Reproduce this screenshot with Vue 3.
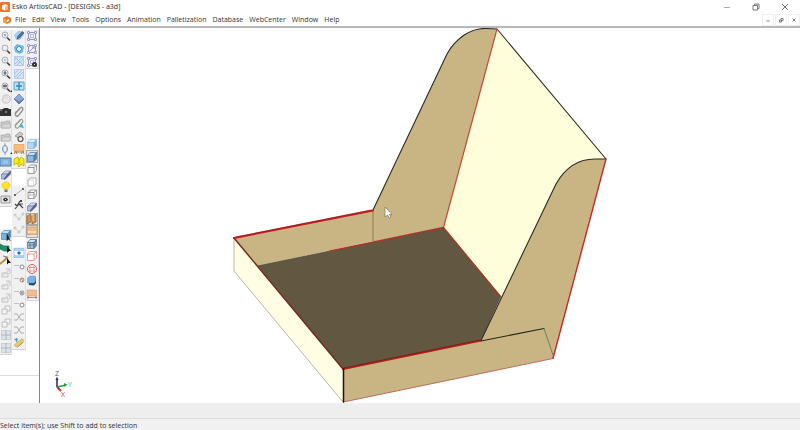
<script setup>
const menus = ['File', 'Edit', 'View', 'Tools', 'Options', 'Animation', 'Palletization', 'Database', 'WebCenter', 'Window', 'Help']

const p = (d, fill = 'none', stroke = 'none', w = 1) => ({ d, fill, stroke, w })
const lens = [
  p('M7 7.5L10 10.5', 'none', '#444', 1.7),
  p('M2 5a3 3 0 1 0 6 0a3 3 0 1 0-6 0Z', '#e9eef2', '#a0a5aa', 0.9)
]
const box = [p('M2 4.5L4.5 2H10.5V7.5L8 10.5H2Z', '#f8f8f8', '#8a8a8a', 0.8), p('M2 4.5H8V10.5M8 4.5L10.5 2', 'none', '#777', 0.8)]
const solid = (front, top, side, line) => [
  p('M1.5 4.5L4 1.5H10.5L8 4.5Z', top, line, 0.7),
  p('M1.5 4.5H8V10.5H1.5Z', front, line, 0.7),
  p('M8 4.5L10.5 1.5V8L8 10.5Z', side, line, 0.7)
]
const corners = p('M1.5 1.5h2v2h-2ZM8.5 1.5h2v2h-2ZM1.5 8.5h2v2h-2ZM8.5 8.5h2v2h-2Z', '#f7f7ff', '#7272b4', 0.6)
const frame = [
  p('M2.5 1V11M9.5 1V11M1 2.5H11M1 9.5H11', 'none', '#7c7cb6', 0.8),
  p('M4.5 4.5H7.5V7.5H4.5Z', '#f7f7ff', '#9a9ac4', 0.7),
  corners
]
const pencil = p('M4 9L5 6L9.500 1.500L11 3L6.500 8Z', '#5f6f80', '#44505c', 0.6)
const hatch = [p('M1.5 1.5H10.5V10.5H1.5Z', '#d6e6fa', '#9cc0e6', 0.7), p('M2 5L5 2M2 9L9 2M4 10L10 4', 'none', '#9dbbe8', 0.8)]
const folder = [p('M1 4H5L6 3H10V10H1Z', '#cbcbcb', '#a5a5a5', 0.7), p('M1 10L3 6H11L10 10Z', '#d8d8d8', '#aaa', 0.6)]
const knot = [p('M1 5.5H6', 'none', '#bbb', 0.9), p('M7 7a2 2 0 1 0 4 0a2 2 0 1 0-4 0', '#fff', '#888', 1)]
const faded = [p('M2 6H8V10H2ZM6 2H10V7', '#eee', '#b9b9b9', 0.8), p('M3 8L9 3', 'none', '#c5c5c5', 0.8)]

const icons = {
  zoomIn: [...lens, p('M4 5H6M5 4V6', 'none', '#777', 0.7)],
  zoom: lens,
  zoomOut: [...lens, p('M4 5H6', 'none', '#777', 0.7)],
  zoomFit: [...lens, p('M5 3V7M3.5 5H6.5', 'none', '#444', 0.9)],
  zoomMenu: [...lens, p('M3.5 4H6.5V6H3.5Z', '#778', '#555', 0.6), p('M10 11H12V9Z', '#222')],
  hand: [p('M4 10C1 7 2 5 3 6V3L5 2H8L10 4V8L8 10Z', '#e8e8e8', '#bbb', 0.8), p('M5 3V6M7 3V6', 'none', '#ccc', 0.6)],
  camera: [p('M0 3H3L4 2H8L9 3H11V10H0Z', '#333'), p('M4 6a2 2 0 1 0 4 0a2 2 0 1 0-4 0', '#777', '#111', 0.8), p('M0 4H2', 'none', '#aaa', 1)],
  folder,
  orbit: [p('M5 2C2 3 2 9 5 10C8 9 8 3 5 2Z', 'none', '#4c83bd', 1), p('M5 0V4M5 8V12', 'none', '#8ab0d8', 1), p('M10 11H12V9Z', '#222')],
  screen: [p('M0 2H11V10H0Z', '#8ab6e6', '#4878aa', 1), p('M2.5 4H8.5V8H2.5Z', '#9cc6ee', '#79a5d4', 0.6)],
  cut: [p('M2 5L5 2H10.500L8 5Z', '#d2def2', '#7d8bb4', 0.7), p('M1.500 5H8L4 10H1.500Z', '#a9bfe4', '#6a7aa4', 0.7), p('M8 5L10.500 2V5L5 10.500L4 10Z', '#5c5e86', '#4a4c6c', 0.5)],
  bulb: [p('M4 8C0 4 3 1 6 1C9 1 12 4 8 8Z', '#ffe12e', '#e5c600', 0.7), p('M4.500 8.500H7.500V11H4.500Z', '#777')],
  eye: [p('M1 2H10V9H1Z', '#e5e5e5', '#888', 0.8), p('M3 5.500C4 3 7 3 8 5.500C7 8 4 8 3 5.500Z', '#333'), p('M5 5H6V6H5Z', '#eee')],
  select: [...solid('#7cb0dc', '#c5e0f6', '#4f82b1', '#5288b8'), p('M7 5V11.500L8.500 10L10.500 11.500', '#222', '#222', 0.7)],
  selectGreen: [p('M0 2L4 4H9V9L4 9L0 7Z', '#20936c', '#126748', 0.6), p('M7 4V11L9 9H11Z', '#151515')],
  selectLine: [p('M0 10L8 3', 'none', '#c88a35', 2), p('M3 2L7 3L5 4', 'none', '#667', 0.8), p('M7 4V10.500L8.500 9H11Z', '#111')],
  faded,
  fadedBox: [p('M2 5H7V10H2ZM5 5V2H10V7H7', '#f4f4f4', '#b3b3b3', 0.8)],
  fadedGrid: [p('M1.5 1.500H10.500V10.500H1.500Z', '#dde3e9', '#bdc4cb', 0.7), p('M1 6H11M6 1V11', 'none', '#aab2ba', 0.9)],
  edit: [p('M1 5L5 1H9L11 5L7 10H3Z', '#9ccdf3'), pencil],
  blueTile: [p('M1 4L4 1L11 3L10 9L7 11L2 9Z', '#6db9ea'), p('M3 6L6 3L9 6L6 9Z', '#d9f0fc', '#3e8fcb', 0.9)],
  circleTile: [...hatch, p('M2 2L10 10', 'none', '#a9b4dc', 0.8)],
  hatch,
  blueFrame: [p('M1 2H11V10H1Z', '#bee1f8', '#5f9cc9', 1), p('M6 2V10M3 6H9', 'none', '#2d84ba', 1.3)],
  diamond: [p('M1 6L6 1L11 6L6 11Z', '#5f7fb4', '#46658f', 0.7), p('M1 5.500L6 1L11 5.500L6 8.500Z', '#8aa9d6')],
  clip: [p('M2 8L7 2C9 0 11 3 9 5L5 10C3 11 1 8 3 6L7 3', 'none', '#909090', 1.4)],
  clipBlue: [p('M2 8L7 2C9 0 11 3 9 5L5 10C3 11 1 8 3 6L7 3', 'none', '#999', 1.2), p('M6 9L9 6L11 10Z', '#2fb0df')],
  nut: [p('M2 5L7 1L10 3L6 7Z', '#ccc', '#999', 0.9), p('M5 8a2.500 2.500 0 1 0 5 0a2.500 2.500 0 1 0-5 0', '#eee', '#555', 1.2)],
  conveyor: [p('M1 1.500H11V8H1Z', '#f5bf7a', '#dba45d', 0.7), p('M1 9H11', 'none', '#888', 1), p('M1 11L3 8L4 11M8 11L10 8L11 11', 'none', '#c56e46', 0.9)],
  fold: [p('M1 3L5 1L6 4L8 1L11 3V10L8 8L6 11L4 7L1 9Z', '#f5ee18', '#b5ad00', 0.8), p('M6 4V8', 'none', '#aaa300', 0.8)],
  line: [p('M2 9L10 3', 'none', '#999', 0.8), p('M1 8H3V10H1ZM9 2H11V4H9Z', '#666')],
  person: [p('M2 10L6 5L10 9M7 2L4 7L2 5M5 5L10 5', 'none', '#444', 1.2), p('M7 1H9V3H7Z', '#444')],
  dots: [p('M2 4L6 8L10 3', 'none', '#ccc', 0.8), p('M1 3H3V5H1ZM5 7H7V9H5ZM9 2H11V4H9Z', '#ddd', '#b8b8b8', 0.5)],
  blueMark: [p('M1 1.500H11V10.500H1Z', '#a9d3f4', '#8bbfe2', 0.7), p('M1.500 4H10.500V8H1.500Z', '#fff'), p('M4 6L6 4L8 6L6 8Z', '#1a70b7')],
  knot,
  knotRed: [...knot, p('M8 5L10.500 9', 'none', '#e0855c', 1.2)],
  knotDark: [...knot, p('M8 7H10', 'none', '#555', 1)],
  cross: [p('M1 3H4L8 9H11M1 9H4L8 3H11', 'none', '#a5a5a5', 0.9)],
  ruler: [p('M1 8L9 1.500L11 3.500L3 10Z', '#efc868', '#c09a48', 0.6), p('M4 10.500L10.500 5', 'none', '#b98f35', 1), p('M1.500 2.500H5M3.500 1V5', 'none', '#4ba3dc', 1.3)],
  frame,
  frameTurn: [p('M2.500 2.500H9.500V9.500H2.500Z', 'none', '#7c7cb6', 0.8), p('M4 8L8 4M6 4H8V6', 'none', '#8080b8', 0.8), corners],
  frameGear: [...frame, p('M6 8.500a2.500 2.500 0 1 0 5 0a2.500 2.500 0 1 0-5 0', '#333'), p('M8 8.500H9', 'none', '#ddd', 1)],
  boxLight: solid('#b5d6f5', '#dceffd', '#84b3df', '#8db8e0'),
  boxBlue: solid('#8cb9e4', '#c4e1f7', '#557fae', '#54799f'),
  box,
  boxWhite: [p('M2 4L4.500 2H10V8L7.500 10H2Z', '#fff', '#999', 0.8), p('M2 4H7.500V10', 'none', '#ccc', 0.7)],
  boxWire: [...box, p('M2 10L4 7H10M4 2V7', 'none', '#999', 0.6)],
  panels: [p('M1 3L5 1V9L1 11ZM6 3L10 1V9L6 11Z', '#cf965c', '#95622f', 0.8), p('M5 1L7 2V8', 'none', '#f2c78d', 1.2)],
  dim: [p('M1 2H11V9.500H1Z', '#efb980', '#c99561', 0.6), p('M2 7H10M3 6V8M9 6V8', 'none', '#fff', 0.9)],
  boxWireBlue: [...solid('#9dbfe0', '#cfe4f6', '#7293b8', '#567'), p('M4 4V10M2 7H8', 'none', '#567', 0.6)],
  boxRed: [p('M1.500 4L4 1.500H10.500V8L8 10.500H1.500ZM1.500 4H8V10.500M8 4L10.500 1.500', '#fff', '#e58c8c', 0.9)],
  circleRed: [p('M1.500 6a4.500 4.500 0 1 0 9 0a4.500 4.500 0 1 0-9 0', '#fff', '#cf5c5c', 1), p('M4 3V9M8 3V9M3 4.500H9M3 8H9', 'none', '#dc8080', 0.8)],
  solidBlue: [p('M2 5L5 2L10 3V8L8 10.500L3 10Z', '#1d466d'), p('M1.500 3L4 1H9.500V6L8 8H1.500Z', '#7db5e2', '#5d97c6', 0.5)],
  measure: [p('M1 2H10.500V8H1Z', '#ecc094', '#d39f74', 0.6), p('M1 9.500H11M2 8V11M10 8V11', 'none', '#a8695a', 0.8)]
}

const rails = [
  [
    { cls: 'g14', items: ['zoomIn', 'zoom', 'zoomOut', 'zoomFit', 'zoomMenu', 'hand', 'camera', 'folder', 'folder', 'orbit', 'screen', 'cut', 'bulb', 'eye'] },
    { cls: 'g10 after-wide', items: ['select', 'selectGreen', 'selectLine', 'faded', 'faded', 'faded', 'fadedBox', 'fadedBox', 'fadedGrid', 'fadedGrid'] }
  ],
  [
    { cls: 'g11', items: ['edit', 'blueTile', 'circleTile', 'hatch', 'blueFrame', 'diamond', 'clip', 'clipBlue', 'nut', 'conveyor', 'fold'] },
    { cls: 'g4 after-mid', items: ['line', 'person', 'dots', 'dots'] },
    { cls: 'g8 after-small', items: ['blueMark', 'knot', 'knotRed', 'knotDark', 'knot', 'cross', 'cross', 'ruler'] }
  ],
  [
    { cls: 'g3', items: ['frame', 'frameTurn', 'frameGear'] },
    { cls: 'g13 after-large', items: ['boxLight', 'boxBlue', 'box', 'boxWhite', 'boxWire', 'cut', 'panels', 'dim', 'boxWireBlue', 'boxRed', 'circleRed', 'solidBlue', 'measure'] }
  ]
]
const pressed = ['boxBlue', 'panels', 'dim']
</script>

<template>
  <div class="window">
    <header class="titlebar">
      <svg class="logo" viewBox="0 0 10 10" aria-hidden="true">
        <rect width="10" height="10" rx="1" fill="#e8762b" />
        <path d="M2 3.5L5 2L8 3.5V7L5 8.5L2 7Z" fill="#fff" />
        <path d="M5 5L8 3.5V7L5 8.5Z" fill="#f3b487" />
      </svg>
      <h1>Esko ArtiosCAD - [DESIGNS - a3d]</h1>
      <div class="controls">
        <button class="faint" aria-label="Minimize"><svg viewBox="0 0 8 8"><path d="M1 4.5H7" /></svg></button>
        <button aria-label="Restore"><svg viewBox="0 0 8 8"><path d="M1 2.5H5.5V7H1ZM2.5 2.5V1H7V5.5H5.5" /></svg></button>
        <button aria-label="Close"><svg viewBox="0 0 8 8"><path d="M1 1L7 7M7 1L1 7" /></svg></button>
      </div>
    </header>

    <nav class="menubar">
      <svg class="doc" viewBox="0 0 8 8" aria-hidden="true">
        <path d="M0 2L4 0L8 2V6L4 8L0 6Z" fill="#e9782c" />
        <path d="M0 2L4 4L4 8L0 6Z" fill="#f3a13f" />
        <path d="M4 4L6 3V5L4 6Z" fill="#fff" />
      </svg>
      <button v-for="m in menus" :key="m" class="menu">{{ m }}</button>
      <div class="child-controls">
        <button aria-label="Minimize document"><svg viewBox="0 0 6 6"><path d="M1.5 4H4.5" /></svg></button>
        <button aria-label="Restore document"><svg viewBox="0 0 6 6"><path d="M1.5 3H3.5V5H1.5ZM3 2.5V1.5H5V3.5H4" /></svg></button>
        <button aria-label="Close document"><svg viewBox="0 0 6 6"><path d="M1.5 1.5L4.5 4.5M4.5 1.5L1.5 4.5" /></svg></button>
      </div>
    </nav>

    <main class="workspace">
      <aside class="dock">
        <div class="rails">
          <div v-for="(rail, r) in rails" :key="r" class="rail">
            <div v-for="(group, g) in rail" :key="g" class="group" :class="group.cls">
              <button v-for="(name, i) in group.items" :key="i" class="tool" :class="{ pressed: pressed.includes(name) }" :aria-label="name">
                <svg viewBox="0 0 12 12">
                  <path v-for="(s, k) in icons[name]" :key="k" :d="s.d" :fill="s.fill" :stroke="s.stroke" :stroke-width="s.w" />
                </svg>
              </button>
            </div>
          </div>
        </div>
        <div class="dock-foot"></div>
      </aside>

      <section class="stage">
        <svg class="model" viewBox="40 28 760 375" role="img" aria-label="3D tray design">
          <g stroke-linejoin="round" stroke-linecap="round" fill="none">
            <path d="M234 238L373 210L373 241L258 266Z" fill="#c9b483" />
            <path d="M373 210L447 54C456 38 471 28 486 28.500L497 29L443.500 227.500L373 241.500Z" fill="#c9b483" />
            <path d="M497 29L606 159L560 240L501 297L443.500 227.500Z" fill="#fffedb" />
            <path d="M258 266L443.500 227.500L501 297L481 340.500L343 369Z" fill="#625740" />
            <path d="M234 238L343 369V402L234 271Z" fill="#fffee5" />
            <path d="M481 340.500L556 184C565 168 578 159 595 159H606L553 358.500L343.500 402V369Z" fill="#c9b483" />

            <path d="M234 238V271L343 402" stroke="#a4a298" stroke-width=".8" />
            <path d="M373 210V241" stroke="#777052" stroke-width=".8" />
            <path d="M373 210L447 54C456 38 471 28 486 28.500L497 29L606 159H595C578 159 565 168 556 184L481 340.500" stroke="#292b22" stroke-width="1.100" />
            <path d="M497 29L443.500 227.500" stroke="#c64b36" stroke-width="1.200" />
            <path d="M258 266L330 251" stroke="#494632" stroke-width=".8" />
            <path d="M330 251L443.500 227.500L501 297" stroke="#ad3426" stroke-width="1.300" />
            <path d="M234 238L343 369" stroke="#702c20" stroke-width="1.500" />
            <path d="M234 238L373 210.500" stroke="#cf1820" stroke-width="2" />
            <path d="M236 237L371 210" stroke="#761b1b" stroke-width=".6" />
            <path d="M343 369L481 340.500" stroke="#b91e1c" stroke-width="1.800" />
            <path d="M344 368L480 340" stroke="#651d17" stroke-width=".7" />
            <path d="M481 341L544 328.500" stroke="#242720" stroke-width="1.100" />
            <path d="M544 328.500L553 355" stroke="#55755a" stroke-width=".8" />
            <path d="M606 159L553 358.500" stroke="#ca2929" stroke-width="1.400" />
            <path d="M553 358.500L343.500 402" stroke="#b86154" stroke-width=".9" />
            <path d="M343.500 369V402" stroke="#151510" stroke-width="1.500" />
          </g>
          <g fill="none" stroke-width="1.500">
            <path d="M57 387V379" stroke="#20207c" />
            <path d="M57 387L66 385" stroke="#289c3e" />
            <path d="M57 387L61 391" stroke="#b52b35" stroke-width="2" />
          </g>
          <path d="M55.500 380L57 376.500L58.500 380Z" fill="#20207c" />
          <path d="M64 383L67.500 384.500L64 387Z" fill="#289c3e" />
          <g class="axes">
            <text x="55" y="376" fill="#5252a5">Z</text>
            <text x="68" y="387" fill="#55aa61">Y</text>
            <text x="61" y="397" fill="#c73d47">X</text>
          </g>
          <path d="M385 207V217L387.500 215L389.500 218L391 217L389.500 214.500H392Z" fill="#fff" stroke="#787064" stroke-width=".7" />
        </svg>
      </section>
    </main>

    <div class="lower-dock"></div>
    <footer class="status">Select item(s); use Shift to add to selection</footer>
  </div>
</template>

<style>
body { background: #fff; }
</style>

<style scoped>
.window {
  display: flex;
  flex-direction: column;
  min-height: 100vh;
  color: #333;
  font-family: "Open Sans", "Noto Sans", sans-serif;
  font-size: 7px;
  overflow: hidden;
}
button {
  display: flex;
  align-items: center;
  justify-content: center;
  padding: 0;
  border: 0;
  background: none;
  color: inherit;
  font: inherit;
}
.titlebar {
  display: flex;
  align-items: center;
  height: 14px;
  gap: 2px;
}
.logo { width: 10px; height: 10px; }
h1 {
  margin: 0;
  font-family: "Noto Sans", "Open Sans", sans-serif;
  font-size: 7px;
  font-weight: 400;
  line-height: 14px;
}
.controls {
  display: flex;
  gap: 21px;
  margin-left: auto;
  padding-right: 11px;
}
.controls svg { width: 8px; height: 8px; fill: none; stroke: #777; stroke-width: 1; }
.controls .faint svg { stroke: #aaa; }
.menubar {
  display: flex;
  align-items: center;
  height: 12px;
  padding-left: 3px;
  border-bottom: 2px solid #b8b8b8;
}
.doc { width: 8px; height: 8px; margin-right: 1px; }
.menu { padding: 0 3px; line-height: 12px; white-space: nowrap; }
.child-controls { display: flex; gap: 1px; margin-left: auto; }
.child-controls button { width: 12px; height: 12px; border: 1px solid #f0f0f0; box-sizing: border-box; }
.child-controls svg { width: 6px; height: 6px; fill: none; stroke: #777; stroke-width: 1; }
.workspace { display: flex; flex: 1; }
.dock {
  display: flex;
  flex-direction: column;
  width: 40px;
  box-sizing: border-box;
  border-right: 1px solid #858585;
  background: #fff;
}
.rails { display: grid; grid-template-columns: 12px 14px 13px; flex: 1; padding-top: 2px; }
.group {
  display: grid;
  grid-auto-rows: 1fr;
  background: #f1f1f1;
  border-right: 1px solid #dedede;
  border-bottom: 1px solid #d4d4d4;
  box-sizing: border-box;
}
.g14 { height: 177px; }
.g10 { height: 126px; }
.g11 { height: 139px; }
.g4 { height: 51px; }
.g8 { height: 103px; }
.g3 { height: 39px; }
.g13 { height: 163px; }
.after-wide { margin-top: 22px; }
.after-mid { margin-top: 17px; }
.after-small { margin-top: 10px; }
.after-large { margin-top: 69px; }
.tool { min-height: 0; }
.tool svg { width: 12px; height: 12px; }
.pressed { background: #e3e3e3; box-shadow: inset 0 0 0 1px #a8a8a8; }
.dock-foot { height: 27px; border-top: 1px solid #dcdcdc; }
.stage { display: flex; flex: 1; min-width: 0; background: #fff; }
.model { width: 100%; height: 100%; }
.axes { font-family: "Open Sans", sans-serif; font-size: 7px; }
.lower-dock { height: 15px; background: #eee; border-bottom: 1px solid #ddd; }
.status { height: 11px; background: #f1f1f1; line-height: 14px; white-space: nowrap; overflow: hidden; }
</style>
